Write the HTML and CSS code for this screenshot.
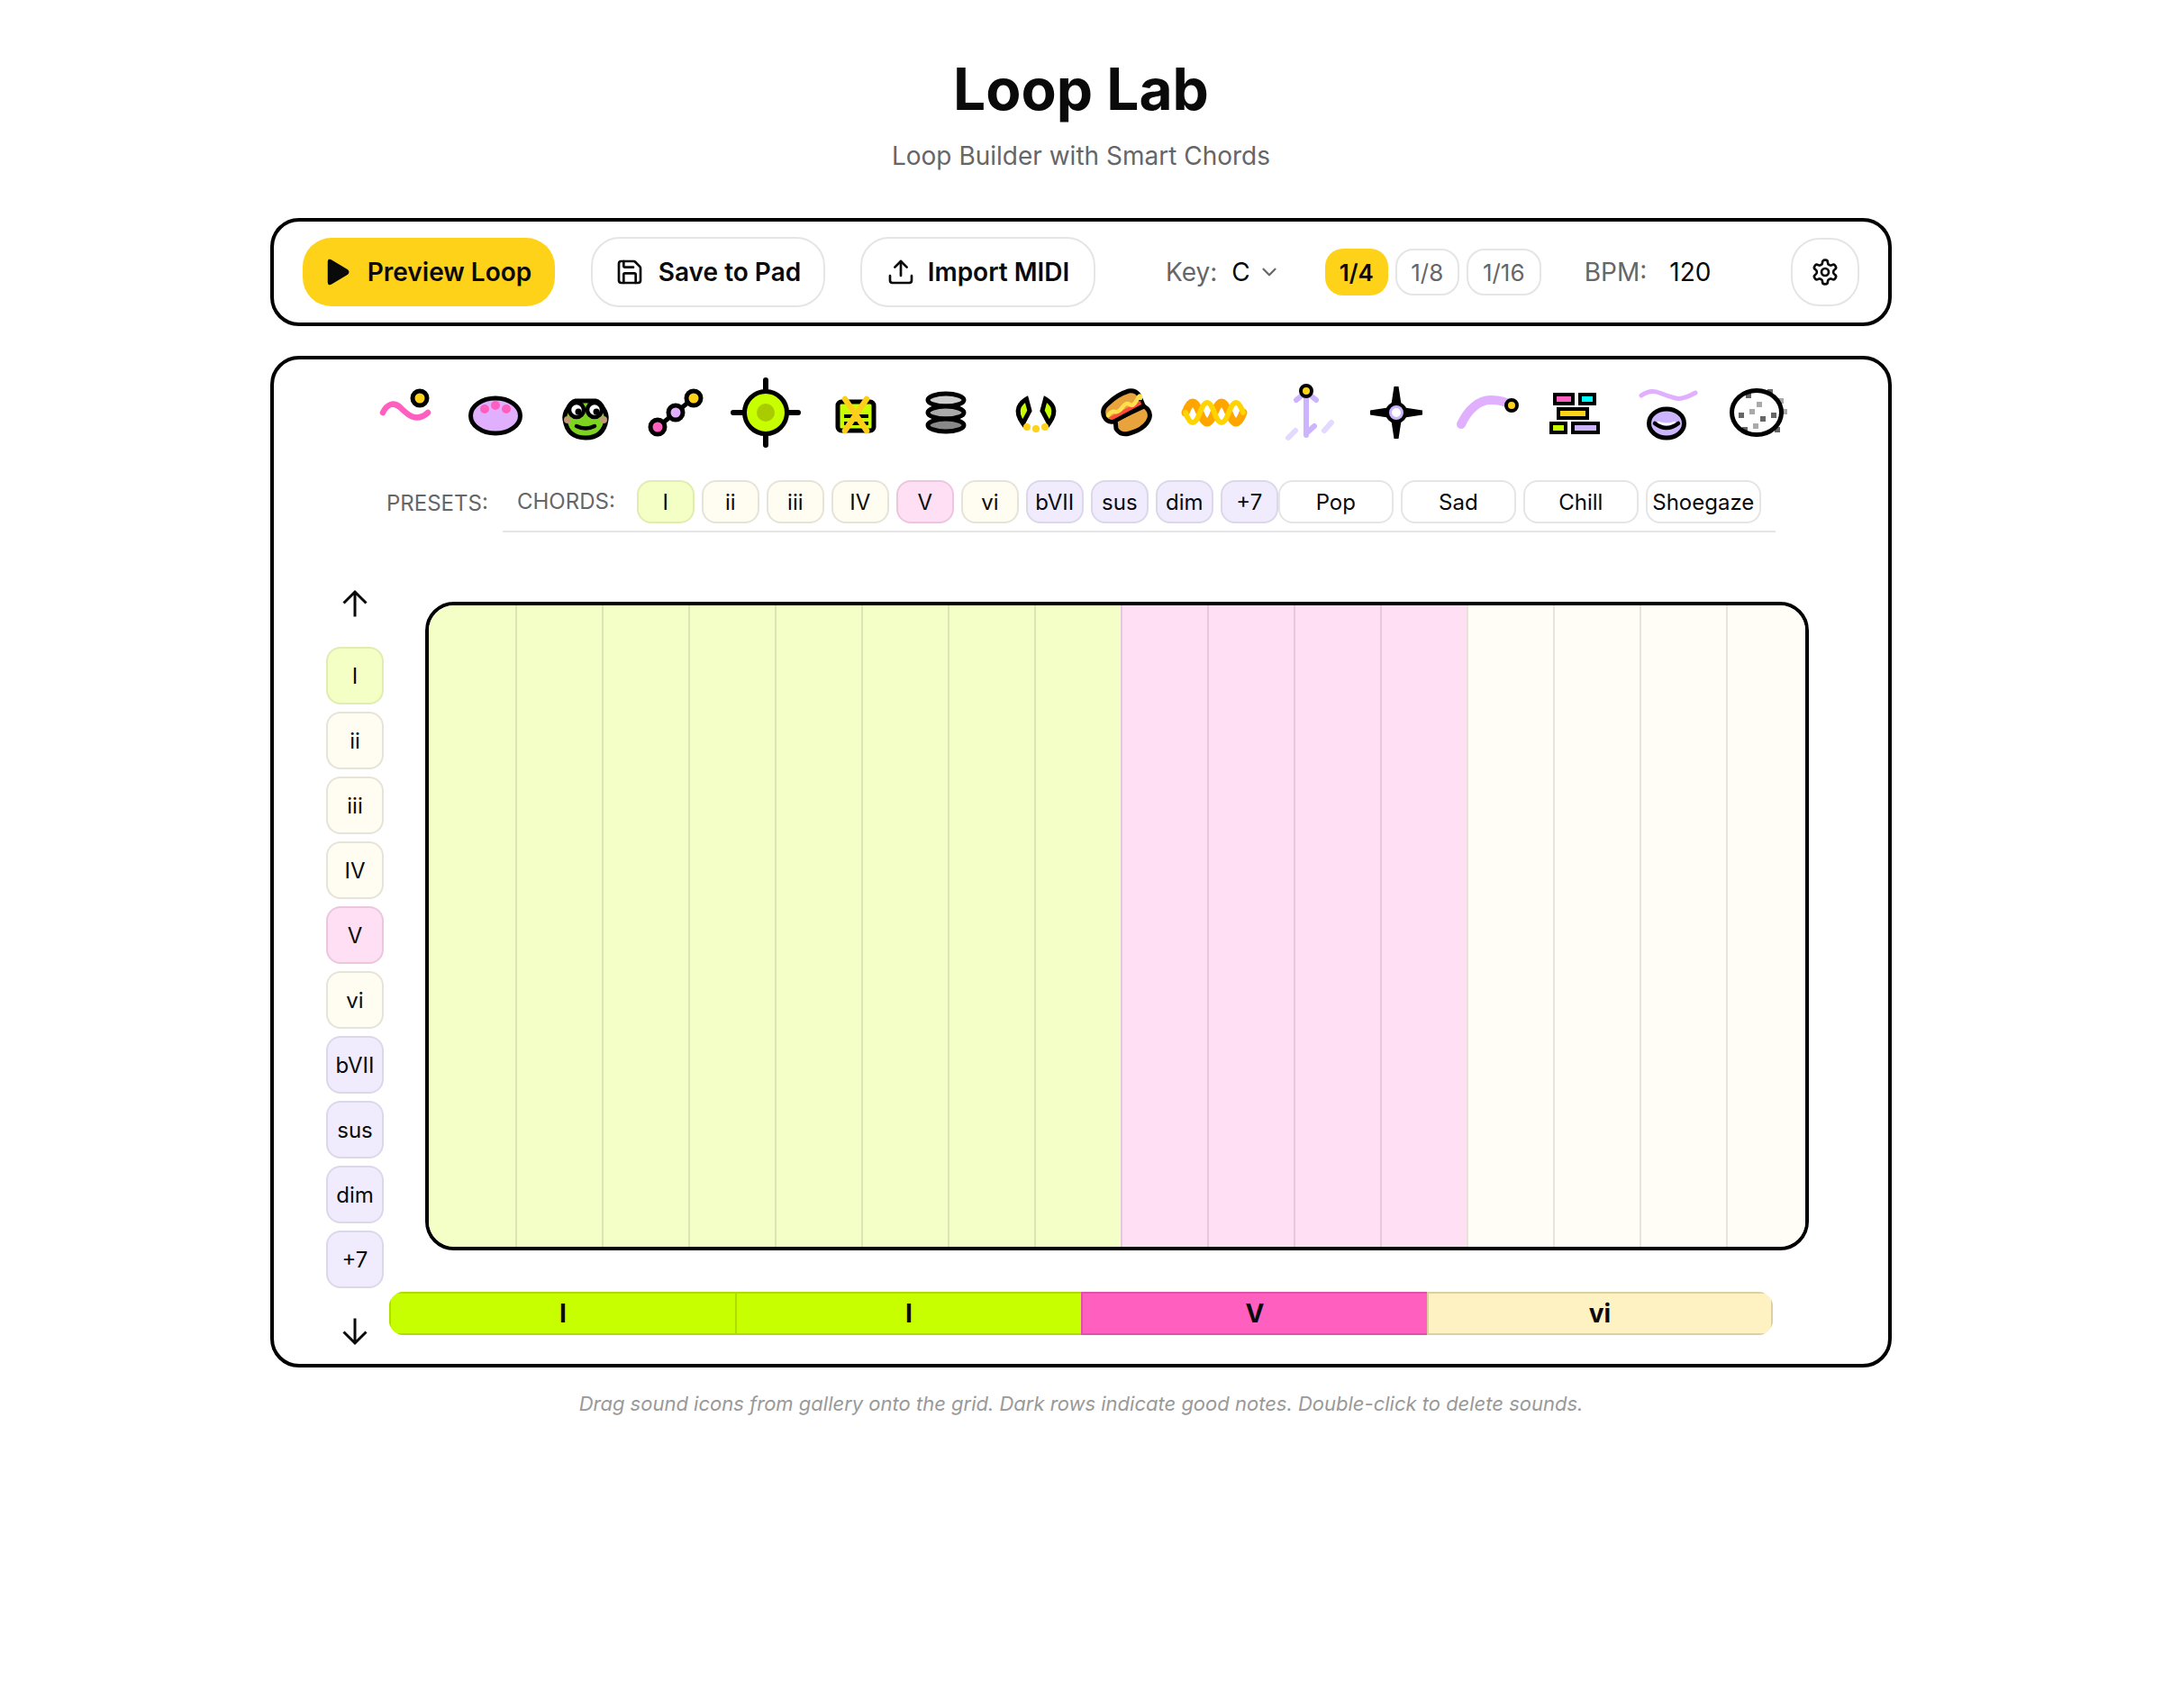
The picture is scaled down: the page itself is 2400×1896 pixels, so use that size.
FILE: index.html
```html
<!DOCTYPE html>
<html lang="en">
<head>
<meta charset="UTF-8">
<meta name="viewport" content="width=device-width, initial-scale=1.0">
<title>Loop Lab</title>
<link rel="stylesheet" href="styles.css">
</head>
<body>
<div class="page">
    <header class="page-header">
        <h1>Loop Lab</h1>
        <p>Loop Builder with Smart Chords</p>
    </header>

    <div class="toolbar">
        <button class="btn btn-play">
            <svg width="28" height="30" viewBox="0 0 28 30"><path d="M3 3.5 Q3 1 5.5 2.5 L23 13 Q25.5 15 23 17 L5.5 27.5 Q3 29 3 26.5 Z" fill="#0a0a0a" stroke="#0a0a0a" stroke-width="2.5" stroke-linejoin="round"/></svg>
            Preview Loop
        </button>
        <button class="btn btn-save">
            <svg width="32" height="32" viewBox="0 0 24 24" fill="none" stroke="#0a0a0a" stroke-width="2" stroke-linecap="round" stroke-linejoin="round"><path d="M15.2 3a2 2 0 0 1 1.4.6l3.8 3.8a2 2 0 0 1 .6 1.4V19a2 2 0 0 1-2 2H5a2 2 0 0 1-2-2V5a2 2 0 0 1 2-2z"/><path d="M17 21v-7a1 1 0 0 0-1-1H8a1 1 0 0 0-1 1v7"/><path d="M7 3v4a1 1 0 0 0 1 1h7"/></svg>
            Save to Pad
        </button>
        <button class="btn btn-import">
            <svg width="32" height="32" viewBox="0 0 24 24" fill="none" stroke="#0a0a0a" stroke-width="2" stroke-linecap="round" stroke-linejoin="round"><path d="M21 15v4a2 2 0 0 1-2 2H5a2 2 0 0 1-2-2v-4"/><path d="M17 8l-5-5-5 5"/><path d="M12 3v12"/></svg>
            Import MIDI
        </button>
        <div class="key-select">
            <span class="muted">Key:</span>
            <span class="value">C</span>
            <svg width="26" height="26" viewBox="0 0 24 24" fill="none" stroke="#666" stroke-width="2" stroke-linecap="round" stroke-linejoin="round"><path d="M6 9l6 6 6-6"/></svg>
        </div>
        <div class="quant">
            <span class="quant-btn on">1/4</span>
            <span class="quant-btn">1/8</span>
            <span class="quant-btn wide">1/16</span>
        </div>
        <div class="bpm">
            <span class="muted">BPM:</span>
            <span class="value">120</span>
        </div>
        <button class="btn-gear">
            <svg width="32" height="32" viewBox="0 0 24 24" fill="none" stroke="#0a0a0a" stroke-width="2" stroke-linecap="round" stroke-linejoin="round"><path d="M12.22 2h-.44a2 2 0 0 0-2 2v.18a2 2 0 0 1-1 1.73l-.43.25a2 2 0 0 1-2 0l-.15-.08a2 2 0 0 0-2.73.73l-.22.38a2 2 0 0 0 .73 2.73l.15.1a2 2 0 0 1 1 1.72v.51a2 2 0 0 1-1 1.74l-.15.09a2 2 0 0 0-.73 2.73l.22.38a2 2 0 0 0 2.73.73l.15-.08a2 2 0 0 1 2 0l.43.25a2 2 0 0 1 1 1.73V20a2 2 0 0 0 2 2h.44a2 2 0 0 0 2-2v-.18a2 2 0 0 1 1-1.73l.43-.25a2 2 0 0 1 2 0l.15.08a2 2 0 0 0 2.73-.73l.22-.39a2 2 0 0 0-.73-2.73l-.15-.08a2 2 0 0 1-1-1.74v-.5a2 2 0 0 1 1-1.74l.15-.09a2 2 0 0 0 .73-2.73l-.22-.38a2 2 0 0 0-2.73-.73l-.15.08a2 2 0 0 1-2 0l-.43-.25a2 2 0 0 1-1-1.73V4a2 2 0 0 0-2-2z"/><circle cx="12" cy="12" r="3"/></svg>
        </button>
    </div>

    <div class="panel">
        <div class="gallery">
            <svg class="sound" viewBox="0 0 80 80" fill="none">
                <path d="M15 40 C20 30 27 28 34 34 C42 42 52 52 65 40" stroke="#ff5fbf" stroke-width="6.5" stroke-linecap="round"/>
                <circle cx="56" cy="24" r="8" fill="#ffd21a" stroke="#000" stroke-width="5"/>
            </svg>
            <svg class="sound" viewBox="0 0 80 80" fill="none">
                <ellipse cx="40" cy="43.5" rx="27.5" ry="19.5" fill="#e0b0ff" stroke="#000" stroke-width="5"/>
                <circle cx="28" cy="36" r="5" fill="#ff5fbf"/>
                <circle cx="40" cy="32" r="5" fill="#ff5fbf"/>
                <circle cx="52" cy="36" r="5" fill="#ff5fbf"/>
            </svg>
            <svg class="sound" viewBox="0 0 80 80" fill="none">
                <path d="M29 27 Q32 27 40 27 Q48 27 51 27 Q56 28 60 36 Q64 42 63 48 Q60 68 40 68 Q20 68 17 48 Q16 42 20 36 Q24 28 29 27 Z" fill="#7ed321" stroke="#000" stroke-width="5"/>
                <circle cx="20" cy="48" r="4" fill="#c09a72"/>
                <circle cx="60" cy="48" r="4" fill="#c09a72"/>
                <circle cx="30" cy="37" r="8" fill="#fff" stroke="#000" stroke-width="4.5"/>
                <circle cx="50" cy="37" r="8" fill="#fff" stroke="#000" stroke-width="4.5"/>
                <circle cx="32" cy="39" r="3.5" fill="#000"/>
                <circle cx="52" cy="39" r="3.5" fill="#000"/>
                <circle cx="40" cy="31" r="1.5" fill="#7ed321"/>
                <path d="M30 55 Q40 60 50 55" stroke="#000" stroke-width="4.5" stroke-linecap="round"/>
            </svg>
            <svg class="sound" viewBox="0 0 80 80" fill="none">
                <path d="M20 56 L60 24" stroke="#000" stroke-width="5"/>
                <circle cx="20" cy="56" r="8" fill="#ff5fbf" stroke="#000" stroke-width="5"/>
                <circle cx="40" cy="40" r="8" fill="#e0b0ff" stroke="#000" stroke-width="5"/>
                <circle cx="60" cy="24" r="8" fill="#ffd21a" stroke="#000" stroke-width="5"/>
            </svg>
            <svg class="sound" viewBox="0 0 80 80" fill="none">
                <circle cx="40" cy="40" r="23.5" fill="#c8ff00" stroke="#000" stroke-width="5"/>
                <circle cx="40" cy="40" r="10" fill="#a8cc00"/>
                <path d="M40 4V14M40 66V76M4 40H14M66 40H76" stroke="#000" stroke-width="6" stroke-linecap="round"/>
            </svg>
            <svg class="sound" viewBox="0 0 80 80" fill="none">
                <rect x="20" y="28" width="40" height="32" rx="4" fill="#c8ff00" stroke="#000" stroke-width="5"/>
                <path d="M27 44H54M27 52H54" stroke="#000" stroke-width="4"/>
                <path d="M28 25L52 60M52 25L28 60" stroke="#ffce1b" stroke-width="6.5" stroke-linecap="round"/>
            </svg>
            <svg class="sound" viewBox="0 0 80 80" fill="none">
                <ellipse cx="40" cy="26" rx="20" ry="7" fill="#ccc" stroke="#000" stroke-width="5"/>
                <ellipse cx="40" cy="40" rx="20" ry="7" fill="#aaa" stroke="#000" stroke-width="5"/>
                <ellipse cx="40" cy="54" rx="20" ry="7" fill="#888" stroke="#000" stroke-width="5"/>
            </svg>
            <svg class="sound" viewBox="0 0 80 80" fill="none">
                <path d="M29.5 25 L33 38 L25.5 52 Q18 42 21 34 Q24 28 29.5 25 Z" fill="#c8ff00" stroke="#000" stroke-width="5" stroke-linejoin="miter"/>
                <path d="M50.5 25 L47 38 L54.5 52 Q62 42 59 34 Q56 28 50.5 25 Z" fill="#c8ff00" stroke="#000" stroke-width="5" stroke-linejoin="miter"/>
                <circle cx="30" cy="56" r="4" fill="#ffd21a"/>
                <circle cx="40" cy="58" r="4" fill="#ffd21a"/>
                <circle cx="50" cy="56" r="4" fill="#ffd21a"/>
            </svg>
            <svg class="sound" viewBox="0 0 80 80" fill="none">
                <path d="M28 48 L60 33 Q68 38 66 46 Q62 58 44 63 Q34 66 29 58 Z" fill="#e8a33d" stroke="#000" stroke-width="5" stroke-linejoin="round"/>
                <path d="M16 45 Q12 36 20 30 Q30 20 43 16 Q50 15 54 20 L59 32 L26 50 Q19 51 16 45 Z" fill="#e8a33d" stroke="#000" stroke-width="5" stroke-linejoin="round"/>
                <path d="M20 46 L56 27 L57 31 L26 47.5 Z" fill="#ff4d3d"/>
                <path d="M20 43 Q24 38 28 39 T36 34 T44 31 T52 26 T56 24" stroke="#ffe14d" stroke-width="4.5" stroke-linecap="round"/>
            </svg>
            <svg class="sound" viewBox="0 0 80 80" fill="none">
                <path d="M6 40 Q14 18 22 40 T38 40 T54 40 T70 40" stroke="#ffa500" stroke-width="9" stroke-linecap="round"/>
                <path d="M6 40 Q14 62 22 40 T38 40 T54 40 T70 40" stroke="#ffd400" stroke-width="6" stroke-linecap="round"/>
            </svg>
            <svg class="sound" viewBox="0 0 80 80" fill="none">
                <path d="M20 68L28 60M60 60L68 51" stroke="#e4daff" stroke-width="6" stroke-linecap="round"/>
                <path d="M40 65V20M29 26L40 17L51 26M40 63L49 55" stroke="#cdb4ff" stroke-width="6" stroke-linecap="round" stroke-linejoin="round"/>
                <circle cx="40" cy="16" r="6" fill="#ffd21a" stroke="#000" stroke-width="4"/>
            </svg>
            <svg class="sound" viewBox="0 0 80 80" fill="none">
                <path d="M37.5 11H42.5L46 34L69 37.5V42.5L46 46L42.5 69H37.5L34 46L11 42.5V37.5L34 34Z" fill="#000"/>
                <circle cx="40" cy="40" r="12" fill="#000"/>
                <circle cx="40" cy="40" r="6.5" fill="#fff" stroke="#cdb4ff" stroke-width="3"/>
            </svg>
            <svg class="sound" viewBox="0 0 80 80" fill="none">
                <path d="M12 53 C20 36 32 26 45 26 C54 26 62 28 68 32" stroke="#e0b0ff" stroke-width="10" stroke-linecap="round"/>
                <circle cx="68" cy="32" r="6" fill="#ffd21a" stroke="#000" stroke-width="4"/>
            </svg>
            <svg class="sound" viewBox="0 0 80 80" fill="none" stroke="#000" stroke-width="4">
                <rect x="16" y="20" width="20" height="10" fill="#ff5fbf"/>
                <rect x="44" y="20" width="16" height="10" fill="#00ffff"/>
                <rect x="20" y="36" width="32" height="10" fill="#ffd21a"/>
                <rect x="12" y="52" width="16" height="10" fill="#c8ff00"/>
                <rect x="36" y="52" width="28" height="10" fill="#cdb4ff"/>
            </svg>
            <svg class="sound" viewBox="0 0 80 80" fill="none">
                <path d="M12 21 Q22 14 32 18 T50 24 T72 18" stroke="#e0b0ff" stroke-width="5" stroke-linecap="round"/>
                <ellipse cx="40" cy="52" rx="19.5" ry="16" fill="#cdb4ff" stroke="#000" stroke-width="5"/>
                <path d="M30 51 Q40 55 50 51" stroke="#fff" stroke-width="3"/>
                <path d="M27 52 Q40 62 53 52" stroke="#000" stroke-width="4.5" stroke-linecap="round"/>
            </svg>
            <svg class="sound" viewBox="0 0 80 80" fill="none">
                <g fill="#666">
                    <rect x="28" y="18" width="6" height="6"/><rect x="20" y="40" width="6" height="6"/>
                    <rect x="44" y="44" width="6" height="6"/><rect x="56" y="40" width="6" height="6"/>
                    <rect x="52" y="14" width="6" height="6"/><rect x="60" y="56" width="6" height="6"/>
                    <rect x="24" y="56" width="6" height="6"/>
                </g>
                <g fill="#aaa">
                    <rect x="40" y="28" width="6" height="6"/><rect x="32" y="36" width="6" height="6"/>
                    <rect x="36" y="52" width="6" height="6"/><rect x="64" y="24" width="6" height="6"/>
                    <rect x="68" y="36" width="6" height="6"/>
                </g>
                <ellipse cx="40" cy="40" rx="27.5" ry="24.5" stroke="#000" stroke-width="5"/>
            </svg>
        </div>

        <div class="chord-row">
            <span class="row-label presets-label">PRESETS:</span>
            <div class="chord-bar">
                <span class="row-label chords-label">CHORDS:</span>
                <span class="chip c-lime">I</span>
                <span class="chip c-cream">ii</span>
                <span class="chip c-cream">iii</span>
                <span class="chip c-cream">IV</span>
                <span class="chip c-pink">V</span>
                <span class="chip c-cream">vi</span>
                <span class="chip c-lav">bVII</span>
                <span class="chip c-lav">sus</span>
                <span class="chip c-lav">dim</span>
                <span class="chip c-lav">+7</span>
                <div class="presets">
                    <span class="preset">Pop</span>
                    <span class="preset">Sad</span>
                    <span class="preset">Chill</span>
                    <span class="preset">Shoegaze</span>
                </div>
            </div>
        </div>

        <div class="workspace">
            <div class="rows">
                <svg class="arrow" viewBox="0 0 32 32" fill="none" stroke="#0a0a0a" stroke-width="3"><path d="M16 30.5V3M3.5 15.5L16 3L28.5 15.5"/></svg>
                <div class="row-chips">
                    <span class="chip c-lime">I</span>
                    <span class="chip c-cream">ii</span>
                    <span class="chip c-cream">iii</span>
                    <span class="chip c-cream">IV</span>
                    <span class="chip c-pink">V</span>
                    <span class="chip c-cream">vi</span>
                    <span class="chip c-lav">bVII</span>
                    <span class="chip c-lav">sus</span>
                    <span class="chip c-lav">dim</span>
                    <span class="chip c-lav">+7</span>
                </div>
                <svg class="arrow" viewBox="0 0 32 32" fill="none" stroke="#0a0a0a" stroke-width="3"><path d="M16 1.5V29M3.5 16.5L16 29L28.5 16.5"/></svg>
            </div>
            <div class="timeline">
                <div class="grid">
                    <div class="col g-lime"></div><div class="col g-lime"></div><div class="col g-lime"></div><div class="col g-lime"></div>
                    <div class="col g-lime"></div><div class="col g-lime"></div><div class="col g-lime"></div><div class="col g-lime"></div>
                    <div class="col g-pink"></div><div class="col g-pink"></div><div class="col g-pink"></div><div class="col g-pink"></div>
                    <div class="col g-cream"></div><div class="col g-cream"></div><div class="col g-cream"></div><div class="col g-cream"></div>
                </div>
                <div class="strip">
                    <div class="seg s-lime">I</div>
                    <div class="seg s-lime">I</div>
                    <div class="seg s-pink">V</div>
                    <div class="seg s-cream">vi</div>
                </div>
            </div>
        </div>
    </div>

    <p class="hint">Drag sound icons from gallery onto the grid. Dark rows indicate good notes. Double-click to delete sounds.</p>
</div>
</body>
</html>
```
FILE: styles.css
```css
* {
    box-sizing: border-box;
}

body {
    margin: 0;
    background-color: #fff;
    color: #0a0a0a;
    font-family: Inter, "Liberation Sans", sans-serif;
}

.page {
    width: 1800px;
    margin: 0 auto;
}

.page-header {
    padding-top: 60px;
    text-align: center;
}

.page-header h1 {
    margin: 0;
    font-size: 64px;
    line-height: 78px;
    font-weight: 700;
}

.page-header p {
    margin: 17px 0 0;
    font-size: 28px;
    line-height: 36px;
    color: #666;
}

/* toolbar */
.toolbar {
    display: flex;
    align-items: center;
    height: 120px;
    margin-top: 51px;
    padding: 0 32px;
    border: 4px solid #000;
    border-radius: 32px;
}

button {
    font-family: inherit;
    color: inherit;
    cursor: pointer;
}

.btn {
    display: flex;
    align-items: center;
    justify-content: center;
    gap: 16px;
    height: 78px;
    border: 2px solid #e5e5e5;
    border-radius: 32px;
    background-color: #fff;
    font-size: 28px;
    font-weight: 600;
}

.btn-play {
    width: 280px;
    height: 76px;
    gap: 18px;
    border: none;
    background-color: #ffd21a;
}

.btn-save {
    width: 260px;
    margin-left: 40px;
}

.btn-import {
    width: 261px;
    margin-left: 39px;
    gap: 14px;
}

.key-select {
    display: flex;
    align-items: center;
    margin-left: 78px;
    font-size: 28px;
}

.muted {
    color: #666;
}

.value {
    margin-left: 16px;
}

.key-select svg {
    margin-left: 8px;
}

.quant {
    display: flex;
    gap: 8px;
    margin-left: 49px;
}

.quant-btn {
    display: flex;
    align-items: center;
    justify-content: center;
    width: 71px;
    height: 52px;
    border: 2px solid #e5e5e5;
    border-radius: 20px;
    font-size: 26px;
    color: #666;
}

.quant-btn.on {
    width: 70px;
    border: none;
    background-color: #ffd21a;
    color: #0a0a0a;
    font-weight: 600;
}

.quant-btn.wide {
    width: 83px;
}

.bpm {
    display: flex;
    align-items: center;
    margin-left: 48px;
    font-size: 28px;
}

.bpm .value {
    margin-left: 25px;
}

.btn-gear {
    display: flex;
    align-items: center;
    justify-content: center;
    width: 76px;
    height: 76px;
    margin-left: auto;
    padding: 0;
    border: 2px solid #e5e5e5;
    border-radius: 32px;
    background-color: #fff;
}

/* main panel */
.panel {
    height: 1123px;
    margin-top: 33px;
    padding: 19px 0 0;
    border: 4px solid #000;
    border-radius: 32px;
}

.gallery {
    display: flex;
    justify-content: center;
    gap: 20px;
}

.sound {
    width: 80px;
    height: 80px;
}

.chord-row {
    display: flex;
    align-items: center;
    margin-top: 35px;
    padding-left: 125px;
}

.row-label {
    font-size: 24px;
    color: #666;
}

.presets-label {
    width: 129px;
    padding-bottom: 8px;
}

.chord-bar {
    display: flex;
    align-items: center;
    gap: 8px;
    width: 1413px;
    padding: 0 0 8px 16px;
    border-bottom: 2px solid #e5e5e5;
}

.chords-label {
    margin-right: 16px;
    padding-bottom: 2px;
}

.chip {
    display: flex;
    align-items: center;
    justify-content: center;
    width: 64px;
    height: 48px;
    border: 2px solid;
    border-radius: 16px;
    font-size: 24px;
}

.c-lime {
    background-color: #f4ffc6;
    border-color: #e0ecb0;
}

.c-cream {
    background-color: #fffdf2;
    border-color: #e6e4d8;
}

.c-pink {
    background-color: #ffdff3;
    border-color: #ecc6de;
}

.c-lav {
    background-color: #f0ecfe;
    border-color: #dcd8ea;
}

.presets {
    display: flex;
    gap: 8px;
    margin-left: -8px;
}

.preset {
    display: flex;
    align-items: center;
    justify-content: center;
    width: 128px;
    height: 48px;
    border: 2px solid #e5e5e5;
    border-radius: 16px;
    font-size: 24px;
}

.workspace {
    display: flex;
    margin-top: 63px;
    padding-left: 58px;
}

.rows {
    width: 64px;
    display: flex;
    flex-direction: column;
    align-items: center;
    gap: 32px;
}

.arrow {
    width: 32px;
    height: 32px;
}

.row-chips {
    display: flex;
    flex-direction: column;
    gap: 8px;
}

.row-chips .chip {
    height: 64px;
}

.timeline {
    display: flex;
    flex-direction: column;
    width: 1576px;
    margin-left: 6px;
}

.grid {
    display: flex;
    width: 1536px;
    height: 720px;
    margin-top: 14px;
    margin-left: auto;
    border: 4px solid #000;
    border-radius: 32px;
    overflow: hidden;
}

.col {
    flex: 0 0 96px;
    border-left: 2px solid rgba(0, 0, 0, 0.1);
}

.col:first-child {
    border-left: none;
}

.g-lime {
    background-color: #f4ffc8;
}

.g-pink {
    background-color: #ffdff3;
}

.g-cream {
    background-color: #fffdf5;
}

.strip {
    display: flex;
    width: 1536px;
    height: 48px;
    margin-top: 46px;
    border-radius: 16px;
    overflow: hidden;
}

.seg {
    flex: 0 0 384px;
    display: flex;
    align-items: center;
    justify-content: center;
    border-style: solid;
    border-width: 2px 0 2px 2px;
    font-size: 28px;
    font-weight: 700;
}

.seg:last-child {
    border-right-width: 2px;
}

.s-lime {
    background-color: #c8ff00;
    border-color: #b0dd00;
}

.s-pink {
    background-color: #ff5fbf;
    border-color: #e050a8;
}

.s-cream {
    background-color: #fff2c2;
    border-color: #ddd0a0;
}

.hint {
    margin: 27px 0 0;
    text-align: center;
    font-size: 22px;
    font-style: italic;
    color: #999;
}
```
